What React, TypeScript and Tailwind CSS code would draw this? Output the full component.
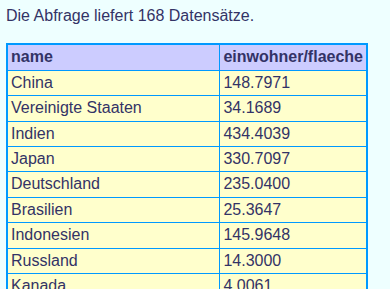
import React from 'react';

const rows: [string, string][] = [
  ['China', '148.7971'],
  ['Vereinigte Staaten', '34.1689'],
  ['Indien', '434.4039'],
  ['Japan', '330.7097'],
  ['Deutschland', '235.0400'],
  ['Brasilien', '25.3647'],
  ['Indonesien', '145.9648'],
  ['Russland', '14.3000'],
  ['Kanada', '4.0061'],
  ['Mexiko', '60.5780'],
];

export default function App() {
  return (
    <div className="min-h-screen bg-[#eeffff] px-[6px] pt-[7px] pb-4 font-['Liberation_Sans',Arial,sans-serif] text-[16px] text-[#333366]">
      <p className="mb-[18px] leading-[18.4px]">Die Abfrage liefert 168 Datensätze.</p>
      <table className="w-[362px] border-separate border-spacing-0 border-2 border-[#0099ff]">
        <thead>
          <tr className="bg-[#ccccff]">
            <th className="w-[213px] border-r border-b border-[#0099ff] px-[3px] py-[3px] text-left font-bold leading-[18.4px]">
              name
            </th>
            <th className="border-b border-[#0099ff] px-[3px] py-[3px] text-left font-bold leading-[18.4px]">
              einwohner/flaeche
            </th>
          </tr>
        </thead>
        <tbody>
          {rows.map(([name, value]) => (
            <tr key={name} className="bg-[#ffffcc]">
              <td className="border-r border-b border-[#0099ff] px-[3px] py-[3px] leading-[18.4px]">{name}</td>
              <td className="border-b border-[#0099ff] px-[3px] py-[3px] leading-[18.4px]">{value}</td>
            </tr>
          ))}
        </tbody>
      </table>
    </div>
  );
}
